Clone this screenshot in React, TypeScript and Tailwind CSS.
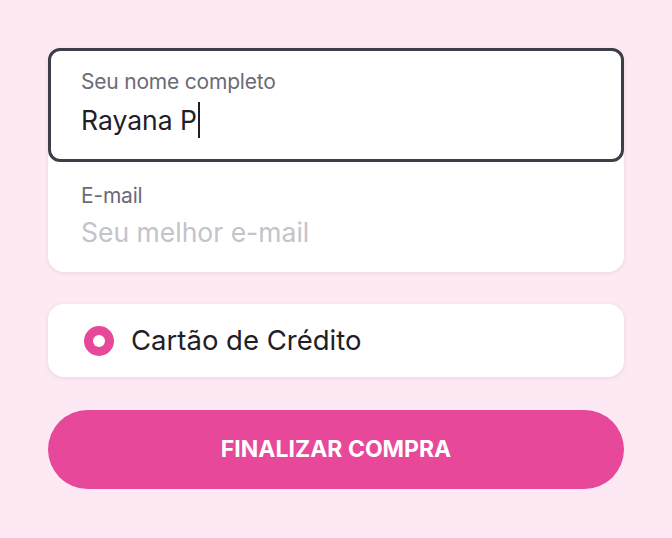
export default function App() {
  return (
    <div
      className="min-h-[538px] bg-[#fce9f3] px-12 pt-12"
      style={{ fontFamily: "Inter, 'Noto Sans', sans-serif" }}
    >
      <div className="rounded-2xl bg-white shadow-[0_1px_4px_rgba(180,120,150,0.18)]">
        <div className="rounded-xl border-[3px] border-[#3d3f48] px-[30px] pt-[19px] pb-[21px]">
          <p className="text-[21px] leading-6 tracking-[-0.2px] text-[#6b6b76]">Seu nome completo</p>
          <p className="mt-2 flex items-center text-[26.5px] leading-8 text-[#1f2027]">
            Rayana P<span className="ml-px inline-block h-[36px] w-[2px] bg-[#1f2027]" />
          </p>
        </div>
        <div className="px-[33px] pt-[22px] pb-[24px]">
          <p className="text-[21px] leading-6 tracking-[-0.2px] text-[#6b6b76]">E-mail</p>
          <p className="mt-2 text-[26.5px] leading-8 text-[#c3c3cc]">Seu melhor e-mail</p>
        </div>
      </div>

      <div className="mt-[32px] flex h-[73px] items-center gap-[17px] rounded-2xl bg-white px-9 shadow-[0_1px_4px_rgba(180,120,150,0.18)]">
        <span className="flex h-[30px] w-[30px] items-center justify-center rounded-full bg-[#e8489a]">
          <span className="h-3 w-3 rounded-full bg-white" />
        </span>
        <span className="text-[27.5px] text-[#1f2027]">Cartão de Crédito</span>
      </div>

      <button
        type="button"
        className="mt-[33px] flex h-[79px] w-full items-center justify-center rounded-full bg-[#e8489a] text-[23px] font-bold text-white"
      >
        FINALIZAR COMPRA
      </button>
    </div>
  );
}
